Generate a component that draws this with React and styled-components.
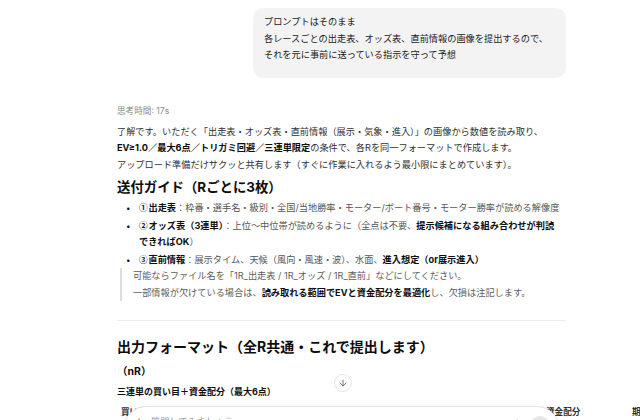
import React from "react";
import styled, { createGlobalStyle } from "styled-components";

const Global = createGlobalStyle`
  html, body { margin: 0; padding: 0; background: #ffffff; }
  body {
    font-family: "Inter", "Noto Sans", "Noto Sans CJK JP", sans-serif;
    color: #0d0d0d;
    -webkit-font-smoothing: antialiased;
  }
  * { box-sizing: border-box; }
`;

const Page = styled.div`
  position: relative;
  width: 640px;
  height: 420px;
  overflow: hidden;
  padding: 8px 0 0 117px;
`;

const Column = styled.div`
  width: 449px;
  display: flex;
  flex-direction: column;
`;

const UserRow = styled.div`
  display: flex;
  justify-content: flex-end;
`;

const Bubble = styled.div`
  width: 313px;
  background: #f3f3f3;
  border-radius: 10px;
  padding: 6px 10px 14px 11px;
  font-size: 9.2px;
  line-height: 16.5px;
  color: #1a1a1a;
  white-space: pre-wrap;
`;

const Thinking = styled.div`
  margin-top: 25px;
  font-size: 8.6px;
  line-height: 16px;
  color: #8a8a8a;
`;

const Para = styled.p`
  margin: 5px 0 0;
  font-size: 9.2px;
  line-height: 16.5px;
  color: #2f2f2f;
`;

const Strong = styled.strong`
  font-weight: 700;
  color: #0d0d0d;
`;

const Num = styled.span`
  display: inline-block;
  width: 9.5px;
  font-family: "Noto Sans CJK JP", sans-serif;
  font-weight: 700;
  font-size: 8.6px;
  line-height: 10px;
  color: #0d0d0d;
`;

const H3 = styled.h3`
  margin: 5px 0 0;
  font-size: 13.4px;
  line-height: 18px;
  font-weight: 700;
  color: #0d0d0d;
`;

const List = styled.ul`
  margin: 4px 0 0;
  padding: 0 0 0 22px;
  list-style: none;
  display: flex;
  flex-direction: column;
  gap: 1px;
`;

const Item = styled.li`
  position: relative;
  font-size: 9.2px;
  line-height: 16.5px;
  color: #555555;
  &::before {
    content: "•";
    position: absolute;
    left: -13px;
    top: 0;
    color: #0d0d0d;
    font-size: 8px;
  }
`;

const Quote = styled.blockquote`
  margin: 0 0 0 3px;
  padding: 0 0 0 11px;
  border-left: 2px solid #dddddd;
  font-size: 9.2px;
  line-height: 16.5px;
  color: #5d5d5d;
`;

const Rule = styled.hr`
  margin: 19px 0 0;
  border: 0;
  border-top: 1px solid #ececec;
  height: 0;
`;

const H2 = styled.h2`
  margin: 16px 0 0;
  font-size: 14px;
  line-height: 20px;
  font-weight: 700;
  color: #0d0d0d;
`;

const H4 = styled.h4`
  margin: 7px 0 0;
  font-size: 10.5px;
  line-height: 16px;
  font-weight: 700;
  color: #0d0d0d;
`;

const H5 = styled.h5`
  margin: 4px 0 0;
  font-size: 9px;
  line-height: 16px;
  font-weight: 700;
  color: #0d0d0d;
`;

const TableHead = styled.div`
  display: flex;
  margin-top: 3px;
  width: 620px;
  border-bottom: 1px solid #e5e5e5;
`;

const Th = styled.div`
  flex: 0 0 ${(p) => p.$w}px;
  padding: 2px 4px;
  font-size: 8.6px;
  line-height: 14px;
  font-weight: 600;
  color: #333333;
  white-space: nowrap;
`;

const ScrollDown = styled.div`
  position: absolute;
  left: 334px;
  top: 374px;
  width: 18px;
  height: 18px;
  border-radius: 50%;
  background: #ffffff;
  border: 1px solid #e6e6e6;
  display: flex;
  align-items: center;
  justify-content: center;
  color: #555;
`;

const Composer = styled.div`
  position: absolute;
  left: 124px;
  top: 406px;
  width: 435px;
  height: 52px;
  border-radius: 22px;
  background: #ffffff;
  border: 1px solid #e3e3e3;
  box-shadow: 0 1px 6px rgba(0, 0, 0, 0.06);
  display: flex;
  align-items: flex-start;
  padding: 8px 8px 0 10px;
  gap: 8px;
`;

const Plus = styled.span`
  font-size: 12px;
  line-height: 12px;
  color: #555;
`;

const Placeholder = styled.span`
  flex: 1;
  font-size: 9.2px;
  line-height: 14px;
  color: #9a9a9a;
`;

const Mic = styled.span`
  margin-top: 4px;
  color: #555;
  display: flex;
`;

const Send = styled.span`
  width: 20px;
  height: 20px;
  border-radius: 50%;
  background: #e6e6e6;
  margin-top: 1px;
`;

export default function App() {
  return (
    <>
      <Global />
      <Page>
        <Column>
          <UserRow>
            <Bubble>
              {"プロンプトはそのまま\n各レースごとの出走表、オッズ表、直前情報の画像を提出するので、\nそれを元に事前に送っている指示を守って予想"}
            </Bubble>
          </UserRow>
          <Thinking>思考時間: 17s</Thinking>
          <Para>
            了解です。いただく「出走表・オッズ表・直前情報（展示・気象・進入）」の画像から数値を読み取り、
            <br />
            <Strong>EV≥1.0／最大6点／トリガミ回避／三連単限定</Strong>の条件で、各Rを同一フォーマットで作成します。
            <br />
            アップロード準備だけサクッと共有します（すぐに作業に入れるよう最小限にまとめています）。
          </Para>
          <H3>送付ガイド（Rごとに3枚）</H3>
          <List>
            <Item>
              <Num>①</Num>
              <Strong>出走表</Strong>：枠番・選手名・級別・全国/当地勝率・モーター/ボート番号・モーター勝率が読める解像度
            </Item>
            <Item>
              <Num>②</Num>
              <Strong>オッズ表（3連単）</Strong>：上位〜中位帯が読めるように（全点は不要、
              <Strong>
                提示候補になる組み合わせが判読
                <br />
                できればOK
              </Strong>
              ）
            </Item>
            <Item>
              <Num>③</Num>
              <Strong>直前情報</Strong>：展示タイム、天候（風向・風速・波）、水面、
              <Strong>進入想定（or展示進入）</Strong>
            </Item>
          </List>
          <Quote>
            可能ならファイル名を「1R_出走表 / 1R_オッズ / 1R_直前」などにしてください。
            <br />
            一部情報が欠けている場合は、<Strong>読み取れる範囲でEVと資金配分を最適化</Strong>し、欠損は注記します。
          </Quote>
          <Rule />
          <H2>出力フォーマット（全R共通・これで提出します）</H2>
          <H4>（nR）</H4>
          <H5>三連単の買い目＋資金配分（最大6点）</H5>
          <TableHead>
            <Th $w={140}>買い目</Th>
            <Th $w={140}>オッズ</Th>
            <Th $w={145}>的中確率</Th>
            <Th $w={86}>資金配分</Th>
            <Th $w={100}>期待値</Th>
          </TableHead>
        </Column>
        <ScrollDown>
          <svg width="10" height="10" viewBox="0 0 24 24" fill="none" stroke="currentColor" strokeWidth="2" strokeLinecap="round" strokeLinejoin="round">
            <path d="M12 5v14" />
            <path d="M19 12l-7 7-7-7" />
          </svg>
        </ScrollDown>
        <Composer>
          <Plus>+</Plus>
          <Placeholder>質問してみましょう</Placeholder>
          <Mic>
            <svg width="10" height="10" viewBox="0 0 24 24" fill="none" stroke="currentColor" strokeWidth="2" strokeLinecap="round">
              <rect x="9" y="3" width="6" height="11" rx="3" />
              <path d="M5 11a7 7 0 0 0 14 0M12 18v3" />
            </svg>
          </Mic>
          <Send />
        </Composer>
      </Page>
    </>
  );
}
